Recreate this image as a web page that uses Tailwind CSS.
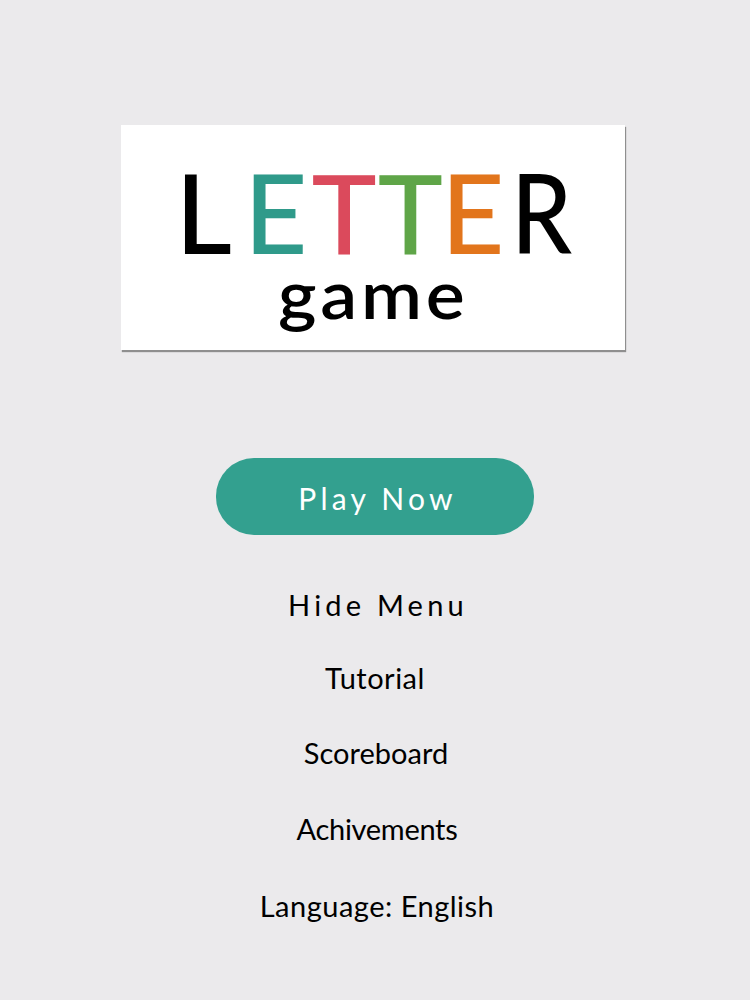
<!DOCTYPE html>
<html>
<head>
<meta charset="utf-8">
<script src="https://cdn.jsdelivr.net/npm/@tailwindcss/browser@4"></script>
</head>
<body class="m-0 bg-[#ebeaec]">
<main class="w-[750px] h-[1000px] flex flex-col items-center pt-[125px] font-['Lato',sans-serif] overflow-hidden">
  <div class="self-start ml-[121px] w-[504px] h-[225px] bg-white shadow-[1px_2px_1px_#8f8f8f] flex flex-col items-center">
    <div class="flex justify-center h-[112px] mt-[30px] ml-[8px] text-[110px] leading-[112px] font-medium text-black">
      <span class="ml-[2px]">L</span><span class="text-[#2f9a8a] ml-[12px]">E</span><span class="text-[#db4a5c] ml-[4px]">T</span><span class="text-[#5fa548] ml-[1px]">T</span><span class="text-[#e2751c] ml-[-2px]">E</span><span class="ml-[7px] scale-x-[0.88] origin-left">R</span>
    </div>
    <div class="text-[68px] leading-[70px] mt-[-9px] font-semibold text-black tracking-[3.5px] scale-x-[1.08]">game</div>
  </div>
  <button class="mt-[108px] w-[318px] h-[77px] pt-[3px] pl-[5px] rounded-[38px] bg-[#33a08f] text-white text-[30px] tracking-[4.2px]">Play Now</button>
  <nav class="mt-[52px] flex flex-col items-center text-black text-[29px] leading-[36px]">
    <a class="ml-[6px] tracking-[4.2px]">Hide Menu</a>
    <a class="mt-[37px] tracking-[0.5px]">Tutorial</a>
    <a class="mt-[39px] ml-[2px]">Scoreboard</a>
    <a class="mt-[40px] ml-[4px] tracking-[-0.3px]">Achivements</a>
    <a class="mt-[41px] ml-[4px] tracking-[0.5px]">Language: English</a>
  </nav>
</main>
</body>
</html>
